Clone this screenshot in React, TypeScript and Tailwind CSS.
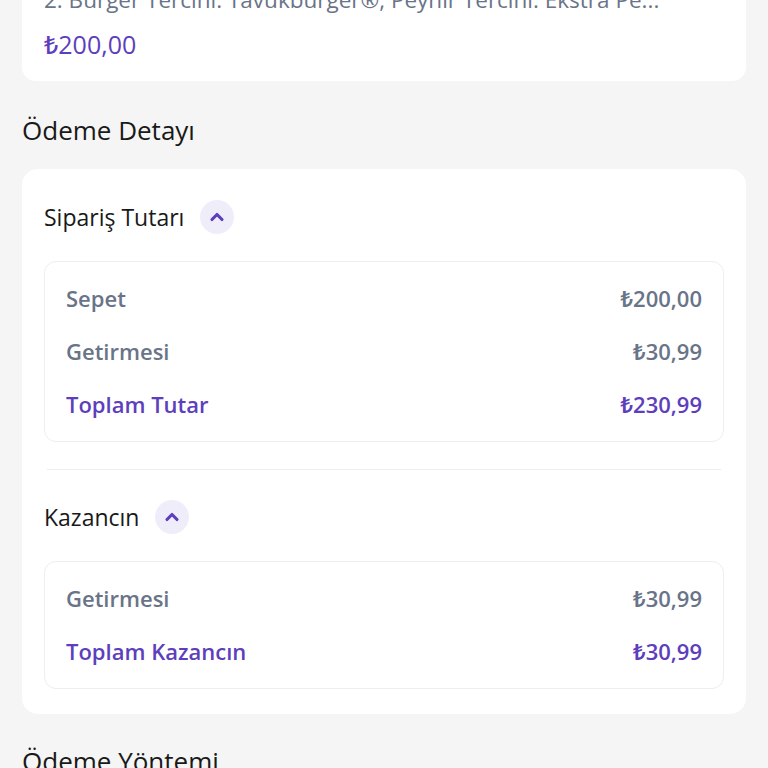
const font = { fontFamily: '"Open Sans", "Noto Sans", sans-serif' };

interface Line {
  label: string;
  value: string;
  total?: boolean;
}

const orderLines: Line[] = [
  { label: "Sepet", value: "₺200,00" },
  { label: "Getirmesi", value: "₺30,99" },
  { label: "Toplam Tutar", value: "₺230,99", total: true },
];

const savingLines: Line[] = [
  { label: "Getirmesi", value: "₺30,99" },
  { label: "Toplam Kazancın", value: "₺30,99", total: true },
];

const ChevronUp = () => (
  <svg width="20" height="20" viewBox="0 0 24 24" fill="none">
    <path d="M6 15l6-6 6 6" stroke="#5d3ebc" strokeWidth="3.8" strokeLinecap="round" strokeLinejoin="round" />
  </svg>
);

const SectionHeader = ({ title }: { title: string }) => (
  <div className="flex h-[34px] items-center gap-[16px]">
    <span className="text-[23px] font-medium text-[#191919]">{title}</span>
    <button className="flex h-[34px] w-[34px] items-center justify-center rounded-full bg-[#f0edfb]">
      <ChevronUp />
    </button>
  </div>
);

const LinesBox = ({ lines }: { lines: Line[] }) => (
  <div className="rounded-[12px] border border-[#eeeeee] px-[21px] py-[10px]">
    {lines.map(({ label, value, total }) => (
      <div
        key={label}
        className={`flex h-[53px] items-center justify-between text-[22px] font-semibold ${
          total ? "text-[#5d3ebc]" : "text-[#697488]"
        }`}
      >
        <span>{label}</span>
        <span>{value}</span>
      </div>
    ))}
  </div>
);

export default function App() {
  return (
    <div className="min-h-[768px] overflow-hidden bg-[#f5f5f5]" style={font}>
      <div className="-mt-[30px] px-[22px]">
        <div className="rounded-b-[14px] bg-white px-[22px] pt-[16px] pb-[23px]">
          <div className="h-[28px] truncate text-[22.5px] leading-[28px] text-[#697488]">
            2. Burger Tercihi: Tavukburger®, Peynir Tercihi: Ekstra Pe...
          </div>
          <div className="mt-[16px] h-[28px] text-[25px] font-medium leading-[28px] text-[#5d3ebc]">
            ₺200,00
          </div>
        </div>

        <h2 className="mt-[34px] h-[30px] text-[26px] font-medium leading-[30px] text-[#191919]">Ödeme Detayı</h2>

        <div className="mt-[24px] rounded-[16px] bg-white px-[22px] pt-[31px] pb-[25px]">
          <SectionHeader title="Sipariş Tutarı" />
          <div className="mt-[27px]">
            <LinesBox lines={orderLines} />
          </div>
          <div className="mx-[3px] mt-[27px] h-px bg-[#eeeeee]" />
          <div className="mt-[30px]">
            <SectionHeader title="Kazancın" />
          </div>
          <div className="mt-[27px]">
            <LinesBox lines={savingLines} />
          </div>
        </div>

        <h2 className="mt-[32px] h-[30px] text-[26px] font-medium leading-[30px] text-[#191919]">Ödeme Yöntemi</h2>
      </div>
    </div>
  );
}
